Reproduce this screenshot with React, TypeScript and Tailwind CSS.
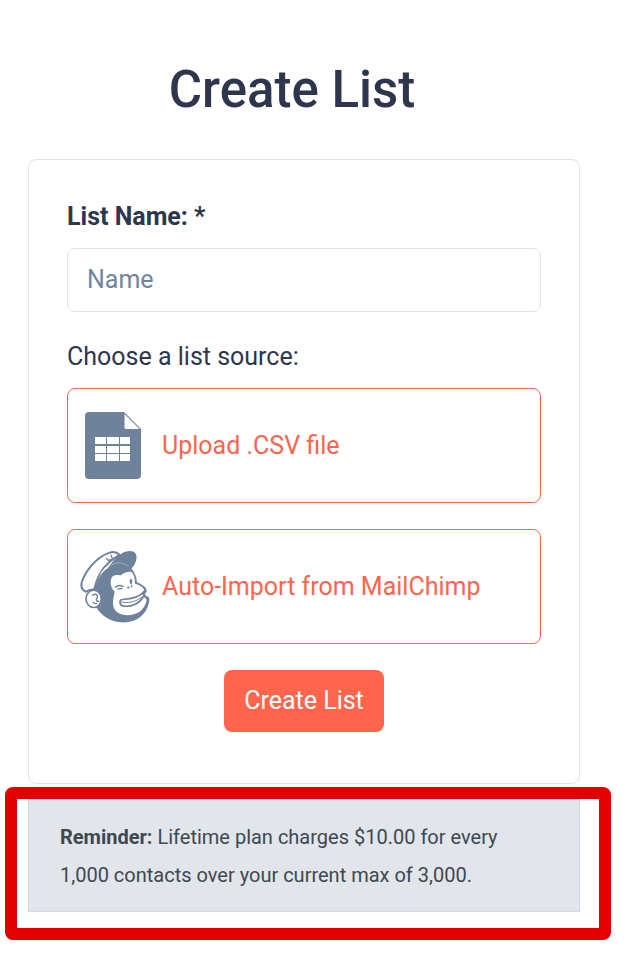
import type { ReactNode } from "react";

function SheetIcon() {
  return (
    <svg viewBox="0 0 60 68" className="h-17 w-15" aria-hidden="true">
      <path
        fill="#6e829c"
        d="M4 0H39L56 17V63a4 4 0 0 1-4 4H4a4 4 0 0 1-4-4V4a4 4 0 0 1 4-4Z"
      />
      <path fill="#fff" d="M39.500 2 54.500 17H41a1.500 1.500 0 0 1-1.500-1.500Z" />
      <path
        fill="#fff"
        d="M10 25h11v7H10zM22 25h12v7H22zM35 25h10v7H35zM10 34h11v7H10zM22 34h12v7H22zM35 34h10v7H35zM10 42h11v7H10zM22 42h12v7H22zM35 42h10v7H35z"
      />
    </svg>
  );
}

function ChimpIcon() {
  return (
    <svg
      viewBox="18 30 210 218"
      className="h-[73px] w-[70px]"
      fill="none"
      stroke="#6e829c"
      strokeLinecap="round"
      strokeLinejoin="round"
      aria-hidden="true"
    >
      {/* head and visor */}
      <path
        fill="#6e829c"
        stroke="none"
        d="M60 152C68 120 88 88 112 70C120 58 130 48 142 41C156 31 180 29 186 42C191 54 184 74 172 85C183 97 188 112 189 127C202 131 217 141 218 151C218 156 215 159 212 162L217 168C225 167 228 174 225 187C218 221 190 247 148 247C110 247 80 226 66 200Z"
      />
      {/* cap */}
      <path
        fill="#fff"
        strokeWidth="6"
        d="M36 155C24 149 20 141 23 128C32 95 68 50 105 38C118 33 128 35 137 44C126 50 115 57 106 66C86 82 69 112 60 148C51 147 43 149 36 155Z"
      />
      <path strokeWidth="4" d="M98 55L107 65M111 45L115 54M103 61L115 57" />
      <path fill="#fff" stroke="none" d="M77 103C86 89 98 77 110 73L101 84L113 77C100 85 88 92 77 103Z" />
      <path stroke="#fff" strokeWidth="1" d="M112 76C124 64 145 66 164 78" />
      {/* face */}
      <path
        fill="#fff"
        stroke="none"
        d="M111 118C114 105 125 103 139 106C148 99 160 93 172 95C180 102 183 117 183 131C198 135 210 143 211 151C209 156 205 160 205 162L213 174C218 174 219 180 216 188C208 212 188 225 160 225C134 225 117 211 117 190C117 173 121 163 122 154C113 147 108 132 111 118Z"
      />
      <path strokeWidth="5" d="M211 153C201 167 178 176 145 178C135 179 136 194 146 197C171 202 197 190 208 169" />
      <path strokeWidth="3" d="M143 186C165 190 187 184 203 171" />
      <path strokeWidth="4" d="M124 141Q135 132 148 139M132 146L144 145" />
      <g fill="#6e829c" stroke="none">
        <ellipse cx="171" cy="124" rx="4" ry="8" />
        <ellipse cx="163" cy="142" rx="4" ry="3" />
        <ellipse cx="173" cy="138" rx="2" ry="4" />
      </g>
      {/* ear */}
      <ellipse cx="59" cy="176" rx="23" ry="26" fill="#fff" strokeWidth="5" />
      <path strokeWidth="4" d="M56 166C66 158 73 165 69 173C65 180 68 185 74 183M57 186Q62 192 68 190" />
    </svg>
  );
}

function SourceButton({ icon, label }: { icon: ReactNode; label: string }) {
  return (
    <button
      type="button"
      className="flex h-[115px] w-full items-center gap-3 rounded-lg border border-[#ff654d] pl-3 text-left text-[#ff654d]"
    >
      <span className="flex w-[70px] shrink-0 justify-center">{icon}</span>
      {label}
    </button>
  );
}

export default function App() {
  return (
    <main className="min-h-screen bg-white pt-[60px] pr-14 pb-11 pl-7 font-[Roboto,sans-serif] text-[25px] leading-8 text-[#2d364d]">
      <h1 className="pr-6 text-center text-[51px] leading-[60px] font-medium">
        Create List
      </h1>

      <form className="mt-[39px] rounded-lg border border-[#dce5ec] px-[38px] pt-[41px] pb-[51px]">
        <label htmlFor="list-name" className="block font-bold">
          List Name: *
        </label>
        <input
          id="list-name"
          type="text"
          placeholder="Name"
          className="mt-[15px] block h-16 w-full rounded-lg border border-[#dce5ec] px-[19px] pb-[2px] placeholder:text-[#71859f]"
        />

        <p className="mt-[29px]">Choose a list source:</p>
        <div className="mt-[15px] flex flex-col gap-[26px]">
          <SourceButton icon={<SheetIcon />} label="Upload .CSV file" />
          <SourceButton icon={<ChimpIcon />} label="Auto-Import from MailChimp" />
        </div>

        <button
          type="submit"
          className="mx-auto mt-[26px] block h-[62px] w-40 rounded-lg bg-[#ff654d] text-white"
        >
          Create List
        </button>
      </form>

      <div className="relative mt-[15px]">
        <p className="border border-[#d3d8e2] bg-[#e2e5ea] px-[31px] pt-[18px] pb-[17px] text-xl leading-[38px] text-[#3d4852]">
          <b>Reminder:</b> Lifetime plan charges $10.00 for every 1,000 contacts
          over your current max of 3,000.
        </p>
        <div className="pointer-events-none absolute -top-3 -right-[31px] -bottom-7 -left-[23px] rounded-lg border-12 border-[#e50000]" />
      </div>
    </main>
  );
}
